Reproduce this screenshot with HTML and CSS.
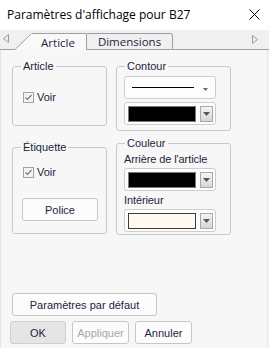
FILE: index.html
```html
<!DOCTYPE html>
<html lang="fr">
<head>
    <meta charset="UTF-8">
    <meta name="viewport" content="width=device-width, initial-scale=1.0">
    <title>Paramètres d'affichage pour B27</title>
    <link rel="stylesheet" href="styles.css">
</head>
<body>
    <div class="window">
        <div class="titlebar">
            <span class="title">Paramètres d'affichage pour B27</span>
            <svg class="close" width="11" height="11" viewBox="0 0 11 11">
                <path d="M0.5 0.5L10.5 10.5M10.5 0.5L0.5 10.5" stroke="#000" stroke-width="1"/>
            </svg>
        </div>

        <div class="tabstrip">
            <div class="tab-gutter">
                <svg width="6" height="9" viewBox="0 0 6 9">
                    <path d="M5.5 0.5L0.5 4.5L5.5 8.5Z" fill="none" stroke="#9a9a9a"/>
                </svg>
            </div>
            <svg class="tab-slant" width="17" height="17" viewBox="0 0 17 17">
                <path d="M0 17L17 0L17 17Z" fill="#f9f9f9"/>
                <path d="M0 16.5L16.5 0.5" stroke="#a0a0a0" stroke-width="1"/>
            </svg>
            <div class="tab tab-active">Article</div>
            <div class="tab">Dimensions</div>
            <div class="tab-fill">
                <svg width="6" height="9" viewBox="0 0 6 9">
                    <path d="M0.5 0.5L5.5 4.5L0.5 8.5Z" fill="none" stroke="#9a9a9a"/>
                </svg>
            </div>
        </div>

        <div class="body">
            <div class="panel">
                <div class="columns">
                    <div class="col col-left">
                        <fieldset class="group group-article">
                            <legend>Article</legend>
                            <label class="check">
                                <span class="box">
                                    <svg width="9" height="9" viewBox="0 0 9 9"><path d="M1.5 4.5L3.5 6.5L7.5 2" fill="none" stroke="#7a7a7a" stroke-width="1.2"/></svg>
                                </span>
                                Voir
                            </label>
                        </fieldset>

                        <fieldset class="group group-label">
                            <legend>Étiquette</legend>
                            <label class="check">
                                <span class="box">
                                    <svg width="9" height="9" viewBox="0 0 9 9"><path d="M1.5 4.5L3.5 6.5L7.5 2" fill="none" stroke="#7a7a7a" stroke-width="1.2"/></svg>
                                </span>
                                Voir
                            </label>
                            <button class="btn btn-font">Police</button>
                        </fieldset>
                    </div>

                    <div class="col col-right">
                        <fieldset class="group group-outline">
                            <legend>Contour</legend>
                            <div class="combo combo-line">
                                <span class="line-sample"></span>
                                <svg width="5" height="3" viewBox="0 0 5 3"><path d="M0 0H5L2.5 3Z" fill="#6a6a6a"/></svg>
                            </div>
                            <div class="combo combo-color">
                                <span class="swatch swatch-black"></span>
                                <span class="drop"><svg width="7" height="4" viewBox="0 0 7 4"><path d="M0 0H7L3.5 4Z" fill="#555"/></svg></span>
                            </div>
                        </fieldset>

                        <fieldset class="group group-color">
                            <legend>Couleur</legend>
                            <div class="field-label">Arrière de l'article</div>
                            <div class="combo combo-color">
                                <span class="swatch swatch-black"></span>
                                <span class="drop"><svg width="7" height="4" viewBox="0 0 7 4"><path d="M0 0H7L3.5 4Z" fill="#555"/></svg></span>
                            </div>
                            <div class="field-label field-label-gap">Intérieur</div>
                            <div class="combo combo-color">
                                <span class="swatch swatch-cream"></span>
                                <span class="drop"><svg width="7" height="4" viewBox="0 0 7 4"><path d="M0 0H7L3.5 4Z" fill="#555"/></svg></span>
                            </div>
                        </fieldset>
                    </div>
                </div>

                <div class="footer">
                    <button class="btn btn-defaults">Paramètres par défaut</button>
                    <div class="actions">
                        <button class="btn btn-ok">OK</button>
                        <button class="btn btn-disabled">Appliquer</button>
                        <button class="btn">Annuler</button>
                    </div>
                </div>
            </div>
            <div class="edge"></div>
        </div>
    </div>
</body>
</html>
```

FILE: styles.css
```css
* {
    box-sizing: border-box;
}
body {
    margin: 0;
    font-family: "Liberation Sans", Arial, sans-serif;
    font-size: 11px;
    color: #1e1e3c;
}
.window {
    width: 269px;
    height: 348px;
    display: flex;
    flex-direction: column;
    background: #f0f0f0;
}
.titlebar {
    height: 30px;
    background: #fff;
    display: flex;
    align-items: center;
    justify-content: space-between;
    padding: 0 9px 2px 7px;
}
.title {
    font-family: "Open Sans", "Noto Sans", sans-serif;
    font-size: 12px;
    color: #000;
}

/* tabs */
.tabstrip {
    height: 20px;
    display: flex;
    align-items: flex-end;
    background: #f0f0f0;
}
.tab-gutter {
    width: 15px;
    height: 20px;
    border-bottom: 1px solid #a0a0a0;
    display: flex;
    align-items: center;
    padding: 0 0 2px 3px;
}
.tab-slant {
    display: block;
    flex-shrink: 0;
}
.tab {
    height: 17px;
    display: flex;
    align-items: center;
    justify-content: center;
    font-family: "Open Sans", "Noto Sans", sans-serif;
    font-size: 11.5px;
    color: #1e1e3c;
    border-top: 1px solid #a0a0a0;
    border-right: 1px solid #a0a0a0;
    border-bottom: 1px solid #a0a0a0;
    border-top-right-radius: 3px;
    width: 86px;
}
.tab-active {
    width: 55px;
    background: #f9f9f9;
    border-bottom: none;
    border-top-right-radius: 2px;
    padding-right: 2px;
}
.tab-fill {
    flex: 1;
    height: 20px;
    border-bottom: 1px solid #a0a0a0;
    display: flex;
    align-items: center;
    justify-content: flex-end;
    padding: 0 11px 1px 0;
}

/* panel */
.body {
    flex: 1;
    display: flex;
}
.panel {
    flex: 1;
    background: #f7f7f7;
    border-left: 1px solid #e4e4e4;
    display: flex;
    flex-direction: column;
    padding: 0 0 4px 9px;
}
.edge {
    width: 3px;
    background: #f0f0f0;
}
.columns {
    display: flex;
    gap: 9px;
    padding-left: 2px;
}
.col {
    display: flex;
    flex-direction: column;
}

.group {
    margin: 0;
    padding: 0 0 0 7px;
    border: 1px solid #c9c9c9;
    border-radius: 3px;
    min-width: 0;
}
.group legend {
    margin-left: 1px;
    padding: 0 2px;
    font-size: 11px;
    line-height: 14px;
}
.group-article {
    width: 95px;
    height: 67px;
    margin-top: 9px;
}
.group-label {
    width: 95px;
    height: 94px;
    margin-top: 14px;
}
.group-outline {
    width: 115px;
    height: 72px;
    margin-top: 9px;
}
.group-color {
    width: 115px;
    height: 99px;
    margin-top: 5px;
}

.check {
    display: flex;
    align-items: center;
    gap: 3px;
    font-size: 11px;
    line-height: 14px;
    margin-left: 3px;
}
.group-article .check {
    margin-top: 17px;
}
.group-label .check {
    margin-top: 11px;
}
.box {
    width: 11px;
    height: 11px;
    border: 1px solid #a3a3a3;
    background: #f2f2f2;
    display: flex;
    align-items: center;
    justify-content: center;
}
.box svg {
    display: block;
}

.btn {
    font-family: "Liberation Sans", Arial, sans-serif;
    font-size: 11px;
    color: #1e1e3c;
    background: #fcfcfc;
    border: 1px solid #c6c6c6;
    border-radius: 3px;
    height: 23px;
    padding: 0;
}
.btn-font {
    width: 76px;
    margin: 19px 0 0 2px;
}

.combo {
    width: 92px;
    height: 23px;
    border: 1px solid #cdcdcd;
    border-radius: 3px;
    background: #fdfdfd;
    display: flex;
    align-items: center;
}
.combo-line {
    margin-top: 3px;
    padding: 0 7px 0 7px;
    justify-content: space-between;
}
.combo-line svg {
    margin-top: 4px;
}
.line-sample {
    width: 62px;
    height: 1px;
    background: #000;
    margin-bottom: 1px;
}
.combo-color {
    padding: 0 2px 0 3px;
    gap: 4px;
}
.group-outline .combo-color {
    margin-top: 3px;
}
.swatch {
    width: 68px;
    height: 16px;
    border: 1px solid #7a7a7a;
}
.swatch-black {
    background: #000;
}
.swatch-cream {
    background: #fff9f0;
    border-color: #3c3c3c;
}
.drop {
    width: 13px;
    height: 16px;
    border: 1px solid #a8a8a8;
    background: linear-gradient(#f4f4f4, #d6d6d6);
    display: flex;
    align-items: center;
    justify-content: center;
}

.field-label {
    font-size: 11px;
    line-height: 14px;
    margin: 2px 0 2px 0;
    letter-spacing: -0.1px;
}
.field-label-gap {
    margin-top: 2px;
}

/* footer buttons */
.footer {
    margin-top: auto;
    display: flex;
    flex-direction: column;
    gap: 5px;
}
.btn-defaults {
    width: 145px;
    margin-left: 2px;
}
.actions {
    display: flex;
    gap: 6px;
}
.actions .btn {
    width: 57px;
}
.actions .btn-ok {
    width: 56px;
    background: #e5e5e5;
    border-color: #cfcfcf;
}
.btn-disabled {
    color: #a8a8a8;
}
```
